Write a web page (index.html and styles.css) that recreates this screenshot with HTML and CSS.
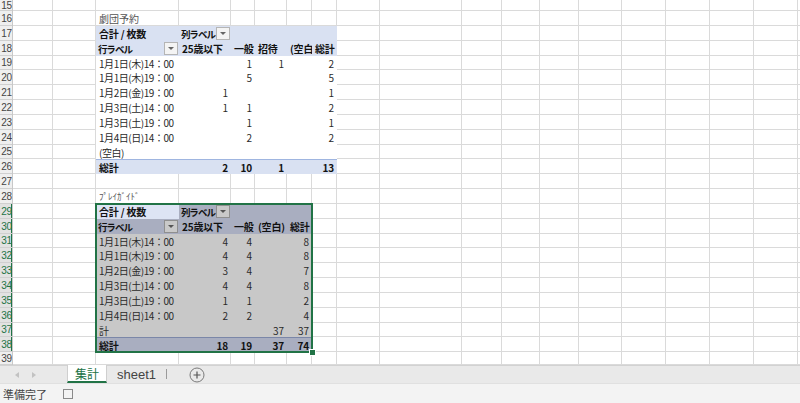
FILE: index.html
```html
<!DOCTYPE html>
<html lang="ja">
<head>
<meta charset="utf-8">
<title>集計</title>
<link rel="stylesheet" href="styles.css">
</head>
<body>
<div class="app">
  <div class="sheet">
    <div class="rows">
      <div class="row"><span class="rn">15</span></div>
      <div class="row"><span class="rn">16</span></div>
      <div class="row"><span class="rn">17</span></div>
      <div class="row"><span class="rn">18</span></div>
      <div class="row"><span class="rn">19</span></div>
      <div class="row"><span class="rn">20</span></div>
      <div class="row"><span class="rn">21</span></div>
      <div class="row"><span class="rn">22</span></div>
      <div class="row"><span class="rn">23</span></div>
      <div class="row"><span class="rn">24</span></div>
      <div class="row"><span class="rn">25</span></div>
      <div class="row"><span class="rn">26</span></div>
      <div class="row"><span class="rn">27</span></div>
      <div class="row"><span class="rn">28</span></div>
      <div class="row sel"><span class="rn">29</span></div>
      <div class="row sel"><span class="rn">30</span></div>
      <div class="row sel"><span class="rn">31</span></div>
      <div class="row sel"><span class="rn">32</span></div>
      <div class="row sel"><span class="rn">33</span></div>
      <div class="row sel"><span class="rn">34</span></div>
      <div class="row sel"><span class="rn">35</span></div>
      <div class="row sel"><span class="rn">36</span></div>
      <div class="row sel"><span class="rn">37</span></div>
      <div class="row sel"><span class="rn">38</span></div>
      <div class="row"><span class="rn">39</span></div>
    </div>
    <div class="cols">
      <span class="hc"></span><span></span><span></span><span></span><span></span><span></span><span></span><span></span><span></span><span></span><span></span><span></span><span></span><span></span><span></span><span></span><span></span><span></span><span></span><span class="last"></span>
    </div>

    <div class="title t1">劇団予約</div>
    <div class="pivot p1">
      <div class="prow hdr">
        <div class="cell b">合計 / 枚数</div>
        <div class="cell b dd"><span class="txt">列ラベル</span><i class="btn"></i></div>
        <div class="cell"></div><div class="cell"></div><div class="cell"></div><div class="cell"></div>
      </div>
      <div class="prow hdr">
        <div class="cell b dd"><span class="txt">行ラベル</span><i class="btn"></i></div>
        <div class="cell b">25歳以下</div>
        <div class="cell b">一般</div>
        <div class="cell b">招待</div>
        <div class="cell b">(空白)</div>
        <div class="cell b">総計</div>
      </div>
      <div class="prow data">
        <div class="cell lbl">1月1日(木)14：00</div><div class="cell n"></div><div class="cell n">1</div><div class="cell n">1</div><div class="cell n"></div><div class="cell n">2</div>
      </div>
      <div class="prow data">
        <div class="cell lbl">1月1日(木)19：00</div><div class="cell n"></div><div class="cell n">5</div><div class="cell n"></div><div class="cell n"></div><div class="cell n">5</div>
      </div>
      <div class="prow data">
        <div class="cell lbl">1月2日(金)19：00</div><div class="cell n">1</div><div class="cell n"></div><div class="cell n"></div><div class="cell n"></div><div class="cell n">1</div>
      </div>
      <div class="prow data">
        <div class="cell lbl">1月3日(土)14：00</div><div class="cell n">1</div><div class="cell n">1</div><div class="cell n"></div><div class="cell n"></div><div class="cell n">2</div>
      </div>
      <div class="prow data">
        <div class="cell lbl">1月3日(土)19：00</div><div class="cell n"></div><div class="cell n">1</div><div class="cell n"></div><div class="cell n"></div><div class="cell n">1</div>
      </div>
      <div class="prow data">
        <div class="cell lbl">1月4日(日)14：00</div><div class="cell n"></div><div class="cell n">2</div><div class="cell n"></div><div class="cell n"></div><div class="cell n">2</div>
      </div>
      <div class="prow data">
        <div class="cell lbl">(空白)</div><div class="cell n"></div><div class="cell n"></div><div class="cell n"></div><div class="cell n"></div><div class="cell n"></div>
      </div>
      <div class="prow total">
        <div class="cell b">総計</div><div class="cell n b">2</div><div class="cell n b">10</div><div class="cell n b">1</div><div class="cell n b"></div><div class="cell n b">13</div>
      </div>
    </div>

    <div class="title t2">ﾌﾟﾚｲｶﾞｲﾄﾞ</div>
    <div class="pivot p2">
      <div class="prow hdr">
        <div class="cell b active">合計 / 枚数</div>
        <div class="cell b dd"><span class="txt">列ラベル</span><i class="btn"></i></div>
        <div class="cell"></div><div class="cell"></div><div class="cell"></div>
      </div>
      <div class="prow hdr">
        <div class="cell b dd"><span class="txt">行ラベル</span><i class="btn"></i></div>
        <div class="cell b">25歳以下</div>
        <div class="cell b">一般</div>
        <div class="cell b">(空白)</div>
        <div class="cell b">総計</div>
      </div>
      <div class="prow data">
        <div class="cell lbl">1月1日(木)14：00</div><div class="cell n">4</div><div class="cell n">4</div><div class="cell n"></div><div class="cell n">8</div>
      </div>
      <div class="prow data">
        <div class="cell lbl">1月1日(木)19：00</div><div class="cell n">4</div><div class="cell n">4</div><div class="cell n"></div><div class="cell n">8</div>
      </div>
      <div class="prow data">
        <div class="cell lbl">1月2日(金)19：00</div><div class="cell n">3</div><div class="cell n">4</div><div class="cell n"></div><div class="cell n">7</div>
      </div>
      <div class="prow data">
        <div class="cell lbl">1月3日(土)14：00</div><div class="cell n">4</div><div class="cell n">4</div><div class="cell n"></div><div class="cell n">8</div>
      </div>
      <div class="prow data">
        <div class="cell lbl">1月3日(土)19：00</div><div class="cell n">1</div><div class="cell n">1</div><div class="cell n"></div><div class="cell n">2</div>
      </div>
      <div class="prow data">
        <div class="cell lbl">1月4日(日)14：00</div><div class="cell n">2</div><div class="cell n">2</div><div class="cell n"></div><div class="cell n">4</div>
      </div>
      <div class="prow data">
        <div class="cell lbl">計</div><div class="cell n"></div><div class="cell n"></div><div class="cell n">37</div><div class="cell n">37</div>
      </div>
      <div class="prow total">
        <div class="cell b">総計</div><div class="cell n b">18</div><div class="cell n b">19</div><div class="cell n b">37</div><div class="cell n b">74</div>
      </div>
      <span class="handle"></span>
    </div>
  </div>

  <div class="tabs">
    <div class="nav"><span class="tri left"></span><span class="tri right"></span></div>
    <div class="tab active">集計</div>
    <div class="tab">sheet1</div>
    <span class="sep"></span>
    <div class="add">
      <svg width="16" height="16" viewBox="0 0 16 16"><circle cx="8" cy="8" r="7" fill="none" stroke="#7a7a7a" stroke-width="1"/><path d="M8 4.5v7M4.5 8h7" stroke="#555" stroke-width="1.2"/></svg>
    </div>
  </div>

  <div class="status">
    <span class="ready">準備完了</span>
    <span class="box"></span>
  </div>
</div>
</body>
</html>
```

FILE: styles.css
```css
* { box-sizing: border-box; }
html, body { margin: 0; padding: 0; background: #fff; }
body {
  font-family: "Noto Sans CJK JP", "Noto Sans", sans-serif;
  font-size: 10px;
  color: #222;
}
.app {
  width: 800px;
  height: 403px;
  display: flex;
  flex-direction: column;
  overflow: hidden;
}

/* ---------- sheet grid ---------- */
.sheet {
  height: 365px;
  flex: none;
  display: grid;
  grid-template-columns: 13px 40px 43px 83px 52px 24px 32px 25px 25px 43px 82px 40px 38px 39px 43px 44px 44px 44px 44px 1fr;
  grid-template-rows: 11px 15px 15px 15px 14px 15px 15px 15px 15px 15px 14px 15px 15px 15px 15px 15px 14px 15px 15px 15px 15px 15px 14px 15px 13px;
  overflow: hidden;
}
.rows, .cols {
  grid-column: 1 / -1;
  grid-row: 1 / -1;
  display: grid;
}
.rows { grid-template-rows: inherit; }
.cols { grid-template-columns: inherit; }
.row {
  display: flex;
  border-bottom: 1px solid #dadada;
}
.rn {
  width: 13px;
  flex: none;
  background: #efefef;
  font-family: "Liberation Sans", "Noto Sans", sans-serif;
  font-size: 10px;
  color: #444;
  display: flex;
  align-items: center;
  justify-content: center;
  letter-spacing: -0.3px;
  border-bottom: 1px solid #d0d0d0;
  margin-bottom: -1px;
}
.row.sel .rn {
  color: #217346;
  background: #e2e2e2;
  box-shadow: inset -2px 0 0 #217346;
}
.cols span { border-right: 1px solid #dadada; }
.cols span.hc { border-right-color: #c8c8c8; }
.cols span.last { border-right: none; }

.title {
  grid-column: 4 / 7;
  padding-left: 3px;
  color: #555;
  line-height: 15px;
  white-space: nowrap;
  font-feature-settings: "palt";
}
.t1 { grid-row: 2; }
.t2 { grid-row: 14; font-size: 9px; }

/* ---------- pivot tables ---------- */
.pivot {
  display: grid;
  grid-template-rows: 15px 15px 14px 15px 15px 15px 15px 15px 14px 15px;
}
.p1 { grid-column: 4 / 10; grid-row: 3 / 13; }
.p2 {
  grid-column: 4 / 9;
  grid-row: 15 / 25;
  position: relative;
  outline: 2px solid #217346;
  outline-offset: -1px;
}
.prow { display: grid; }
.p1 .prow { grid-template-columns: 83px 52px 24px 32px 25px 25px; }
.p2 .prow { grid-template-columns: 83px 52px 24px 32px 25px; }

.cell {
  padding: 0 2px 0 3px;
  white-space: nowrap;
  overflow: hidden;
  display: flex;
  align-items: center;
  min-width: 0;
  color: #2a2a2a;
}
.cell.lbl { letter-spacing: -0.45px; }
.cell.n { justify-content: flex-end; padding-right: 3px; }
.cell.b {
  font-weight: bold;
  color: #111;
  font-feature-settings: "palt";
  letter-spacing: -0.2px;
}
.cell.dd { padding-right: 1px; padding-left: 2px; }
.cell.dd .txt {
  flex: 1 1 auto;
  min-width: 0;
  font-size: 9.5px;
  letter-spacing: -0.6px;
  overflow: visible;
}
.btn {
  flex: none;
  width: 14px;
  height: 13px;
  border: 1px solid #b5b5b5;
  background: #f4f4f4;
  display: flex;
  align-items: center;
  justify-content: center;
}
.btn::after {
  content: "";
  border-left: 3px solid transparent;
  border-right: 3px solid transparent;
  border-top: 3px solid #666;
}

.p1 .hdr { background: #d9e1f2; }
.p1 .data { background: #fff; }
.p1 .total { background: #d9e1f2; border-top: 1px solid #9fb5e0; }

.p2 .hdr { background: #a9aec0; }
.p2 .data { background: #c8c8c8; }
.p2 .total { background: #a9aec0; border-top: 1px solid #7b87a8; }
.p2 .cell.active { background: #dde4f4; }
.p2 .btn { background: #c9c9c9; border-color: #8f8f8f; }
.p2 .btn::after { border-top-color: #555; }

.handle {
  position: absolute;
  right: -3px;
  bottom: -3px;
  width: 5px;
  height: 5px;
  background: #217346;
  outline: 1px solid #fff;
}

/* ---------- sheet tabs ---------- */
.tabs {
  height: 18px;
  flex: none;
  background: #e9e9e9;
  border-top: 1px solid #d2d2d2;
  display: flex;
  align-items: stretch;
}
.nav {
  width: 67px;
  display: flex;
  align-items: center;
  gap: 13px;
  padding-left: 15px;
}
.tri {
  width: 0;
  height: 0;
  border-top: 3px solid transparent;
  border-bottom: 3px solid transparent;
}
.tri.left { border-right: 4px solid #c2c2c2; }
.tri.right { border-left: 4px solid #c2c2c2; }
.tab {
  display: flex;
  align-items: center;
  justify-content: center;
  padding: 0 10px;
  font-family: "Liberation Sans", "Noto Sans CJK JP", sans-serif;
  font-size: 13px;
  color: #444;
  margin-top: -1px;
}
.tab.active {
  width: 40px;
  padding: 0;
  background: #fff;
  color: #217346;
  font-family: "Noto Sans CJK JP", sans-serif;
  font-size: 12px;
  border-bottom: 2px solid #217346;
  border-left: 1px solid #cfcfcf;
  border-right: 1px solid #cfcfcf;
}
.sep {
  width: 1px;
  background: #9a9a9a;
  margin: 3px 0 4px 0;
}
.add {
  margin-left: 22px;
  display: flex;
  align-items: center;
}
.add svg { display: block; }

/* ---------- status bar ---------- */
.status {
  flex: 1;
  background: #f3f3f3;
  border-top: 1px solid #e0e0e0;
  display: flex;
  align-items: center;
  padding-left: 3px;
  font-size: 11px;
  color: #444;
}
.box {
  width: 10px;
  height: 10px;
  border: 1px solid #8a8a8a;
  margin-left: 16px;
}
```
